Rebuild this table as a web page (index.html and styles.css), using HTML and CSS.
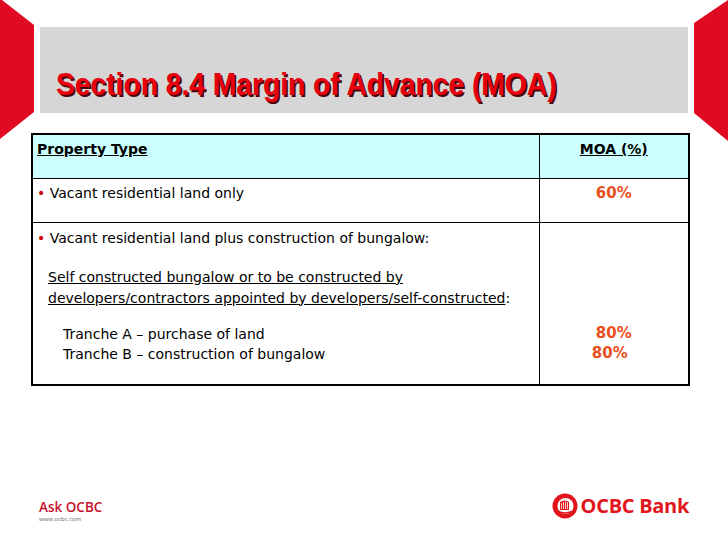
FILE: index.html
```html
<!DOCTYPE html>
<html>
<head>
<meta charset="utf-8">
<link rel="stylesheet" href="styles.css">
</head>
<body>
<div class="slide">
  <svg class="deco deco-left" width="34" height="142" viewBox="0 0 34 142"><polygon points="0,0 2,0 34,25 34,112 0,139" fill="#e00a22"/></svg>
  <svg class="deco deco-right" width="34" height="142" viewBox="0 0 34 142"><polygon points="0,23 34,0 34,141 0,113" fill="#e00a22"/></svg>

  <div class="title-bar">
    <h1 class="title">Section 8.4 Margin of Advance (MOA)</h1>
  </div>

  <table class="moa">
    <colgroup>
      <col class="c1">
      <col class="c2">
    </colgroup>
    <tr class="head">
      <th class="col-type"><u>Property Type</u></th>
      <th class="col-moa"><u>MOA (%)</u></th>
    </tr>
    <tr class="row-a">
      <td class="col-type"><span class="dot">•</span> Vacant residential land only</td>
      <td class="col-moa val">60%</td>
    </tr>
    <tr class="row-b">
      <td class="col-type">
        <p class="line"><span class="dot">•</span> Vacant residential land plus construction of bungalow:</p>
        <p class="sub"><u>Self constructed bungalow or to be constructed by<br>developers/contractors appointed by developers/self-constructed</u>:</p>
        <p class="tranche">Tranche A – purchase of land<br>Tranche B – construction of bungalow</p>
      </td>
      <td class="col-moa val">
        <p class="tranche-val">80%<br><span class="shift">80%</span></p>
      </td>
    </tr>
  </table>

  <div class="footer">
    <div class="ask">
      <div class="ask-name">Ask OCBC</div>
      <div class="ask-url">www.ocbc.com</div>
    </div>
    <div class="bank">
      <svg class="bank-logo" width="26" height="26" viewBox="0 0 26 26">
        <circle cx="13" cy="13" r="12.5" fill="#e2141c"/>
        <circle cx="13.5" cy="13" r="8" fill="#fff"/>
        <path d="M8 9 Q13 6 17 9 L17 17 L8 17 Z" fill="#e2141c"/>
        <path d="M9.5 10 L9.5 16 M11.5 9 L11.5 16 M13.5 8.6 L13.5 16 M15.5 9 L15.5 16" stroke="#fff" stroke-width="0.8"/>
        <path d="M6 17.5 Q13 21 20 17.5 L19 19.5 Q13 22 7 19.5 Z" fill="#e2141c"/>
      </svg>
      <span class="bank-name">OCBC Bank</span>
    </div>
  </div>
</div>
</body>
</html>
```
FILE: styles.css
```css
html, body {
  margin: 0;
  padding: 0;
  background: #fff;
}
.slide {
  position: relative;
  width: 728px;
  height: 546px;
  overflow: hidden;
  font-family: "DejaVu Sans", sans-serif;
  display: flex;
  flex-direction: column;
}
.deco {
  position: absolute;
  top: 0;
  display: block;
}
.deco-left { left: 0; }
.deco-right { right: 0; }

.title-bar {
  margin: 27px 40px 0 40px;
  height: 86px;
  background: #d6d6d6;
  display: flex;
  align-items: flex-end;
  box-sizing: border-box;
  padding: 0 0 13px 16px;
}
.title {
  margin: 0;
  font-family: "Liberation Sans", Arial, sans-serif;
  font-weight: bold;
  font-size: 31px;
  line-height: 31px;
  color: #e8000f;
  text-shadow: 2px 2px 0 #4a0606;
  white-space: nowrap;
  transform: scaleX(0.91);
  transform-origin: left bottom;
}

.moa {
  margin: 20px 0 0 31px;
  width: 659px;
  table-layout: fixed;
  border-collapse: collapse;
  border: 2px solid #000;
  font-size: 14px;
  color: #000;
}
.moa .c2 { width: 150px; }
.moa th, .moa td {
  border: 1px solid #000;
  vertical-align: top;
  padding: 0 5px;
  text-align: left;
  font-weight: normal;
}
.moa .col-moa {
  text-align: center;
}
.moa .head th {
  background: #ccffff;
  font-weight: bold;
  height: 44px;
  padding-top: 5px;
  box-sizing: border-box;
  line-height: 18px;
}
.moa .col-type { padding-left: 4px; }
.row-a td {
  height: 44px;
  padding-top: 5px;
  line-height: 18px;
  box-sizing: border-box;
}
.row-b td {
  height: 163px;
  box-sizing: border-box;
  padding-top: 6px;
}
.dot {
  color: #cc0000;
  font-size: 14px;
}
.moa .val {
  color: #e8501e;
  font-weight: bold;
  font-size: 15px;
}
p { margin: 0; }
.line { line-height: 19px; }
.sub {
  margin-top: 19px;
  padding-left: 11px;
  line-height: 21px;
}
.tranche {
  margin-top: 15px;
  padding-left: 26px;
  line-height: 20px;
}
.tranche-val {
  margin-top: 94px;
  line-height: 20px;
}
.shift {
  position: relative;
  left: -4px;
}

.footer {
  margin-top: auto;
  height: 47px;
  padding: 0 39px;
  display: flex;
  justify-content: space-between;
  align-items: flex-start;
}
.ask-name {
  font-family: "Open Sans", sans-serif;
  font-weight: 600;
  font-size: 13.5px;
  line-height: 16px;
  color: #c8102e;
}
.ask-url {
  font-family: "Open Sans", sans-serif;
  font-size: 6px;
  line-height: 8px;
  margin-top: 0;
  color: #666;
}
.bank {
  display: flex;
  align-items: center;
  gap: 3px;
  margin-top: -7px;
}
.bank-logo { display: block; }
.bank-name {
  font-family: "Open Sans", sans-serif;
  font-weight: bold;
  font-size: 20px;
  color: #e2141c;
  letter-spacing: -0.3px;
}
```
